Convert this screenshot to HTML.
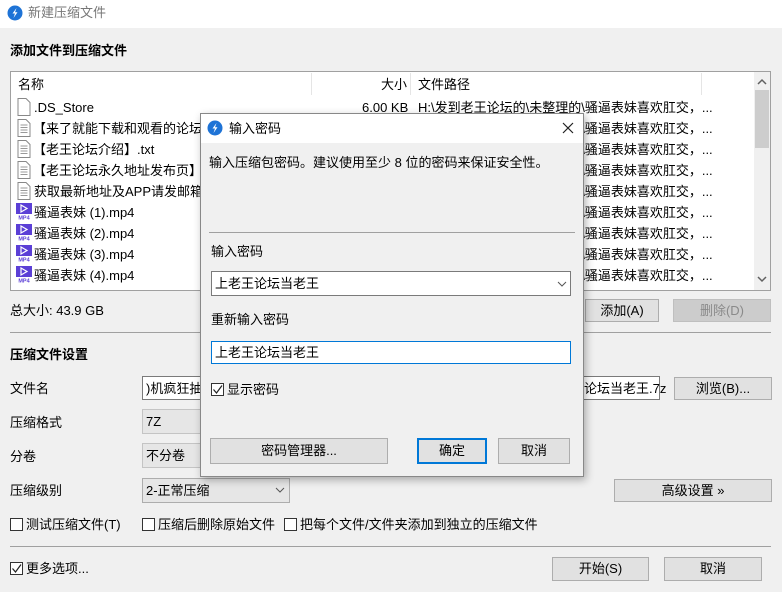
<!DOCTYPE html>
<html><head><meta charset="utf-8">
<style>
*{box-sizing:border-box;margin:0;padding:0}
body{width:782px;height:592px;background:#f0f0f0;position:relative;overflow:hidden;font-family:"Liberation Sans","Noto Sans CJK SC",sans-serif;font-size:13px;color:#000}
.a{position:absolute;white-space:nowrap;line-height:15px}
.btn{position:absolute;background:#e1e1e1;border:1px solid #adadad;text-align:center;font-size:13px}
.cb{position:absolute;width:13px;height:13px;border:1px solid #333;background:#fff}
.ico{position:absolute}
</style></head><body>
<div class="a" style="left:0;top:0;width:782px;height:28px;background:#fff"></div>
<svg class="ico" style="left:7px;top:5px" width="16" height="16" viewBox="0 0 16 16"><circle cx="8" cy="8" r="7.5" fill="#1e73d6"/><path d="M9.5 3 L5.5 8.5 H8 L6.5 13 L10.5 7.3 H8 Z" fill="#fff"/></svg>
<div class="a" style="left:28px;top:5px;color:#777">新建压缩文件</div>

<div class="a" style="left:10px;top:43px;font-weight:bold">添加文件到压缩文件</div>

<div class="a" style="left:10px;top:71px;width:761px;height:220px;background:#fff;border:1px solid #a0a0a0"></div>
<div class="a" style="left:311px;top:73px;width:1px;height:22px;background:#e5e5e5"></div>
<div class="a" style="left:410px;top:73px;width:1px;height:22px;background:#e5e5e5"></div>
<div class="a" style="left:701px;top:73px;width:1px;height:22px;background:#e5e5e5"></div>
<div class="a" style="left:18px;top:77px">名称</div>
<div class="a" style="left:381px;top:77px">大小</div>
<div class="a" style="left:418px;top:77px">文件路径</div>
<div class="a" style="left:754px;top:72px;width:16px;height:218px;background:#f0f0f0"></div>
<div class="a" style="left:755px;top:90px;width:14px;height:58px;background:#cdcdcd"></div>
<svg class="ico" style="left:756px;top:78px" width="12" height="8"><path d="M2 6 L6 2 L10 6" stroke="#606060" stroke-width="1.5" fill="none"/></svg>
<svg class="ico" style="left:756px;top:275px" width="12" height="8"><path d="M2 2 L6 6 L10 2" stroke="#606060" stroke-width="1.5" fill="none"/></svg>

<div id="rows"></div>
<div class="a" style="left:362px;top:100px">6.00 KB</div>

<div class="a" style="left:10px;top:303px">总大小: 43.9 GB</div>
<div class="btn" style="left:585px;top:299px;width:74px;height:23px;line-height:21px">添加(A)</div>
<div class="btn" style="left:673px;top:299px;width:98px;height:23px;line-height:21px;background:#ccc;border-color:#bfbfbf;color:#8a8a8a">删除(D)</div>
<div class="a" style="left:10px;top:332px;width:761px;height:1px;background:#a0a0a0"></div>

<div class="a" style="left:10px;top:347px;font-weight:bold">压缩文件设置</div>
<div class="a" style="left:10px;top:381px">文件名</div>
<div class="a" style="left:142px;top:376px;width:518px;height:24px;background:#fff;border:1px solid #7a7a7a"></div>
<div class="a" style="left:146px;top:381px">)机疯狂抽插</div>
<div class="a" style="left:584px;top:381px">论坛当老王.7z</div>
<div class="btn" style="left:674px;top:377px;width:98px;height:23px;line-height:21px">浏览(B)...</div>

<div class="a" style="left:10px;top:415px">压缩格式</div>
<div class="a" style="left:142px;top:409px;width:148px;height:25px;background:#e6e6e6;border:1px solid #c4c4c4"></div>
<div class="a" style="left:146px;top:414px">7Z</div>
<div class="a" style="left:10px;top:449px">分卷</div>
<div class="a" style="left:142px;top:443px;width:148px;height:25px;background:#e6e6e6;border:1px solid #c4c4c4"></div>
<div class="a" style="left:146px;top:448px">不分卷</div>
<div class="a" style="left:10px;top:483px">压缩级别</div>
<div class="a" style="left:142px;top:478px;width:148px;height:25px;background:#e6e6e6;border:1px solid #adadad"></div>
<div class="a" style="left:146px;top:483px">2-正常压缩</div>
<svg class="ico" style="left:275px;top:487px" width="10" height="6"><path d="M1 1 L5 5 L9 1" stroke="#555" fill="none"/></svg>
<div class="btn" style="left:614px;top:479px;width:158px;height:23px;line-height:21px">高级设置 »</div>

<div class="cb" style="left:10px;top:518px"></div><div class="a" style="left:26px;top:517px">测试压缩文件(T)</div>
<div class="cb" style="left:142px;top:518px"></div><div class="a" style="left:158px;top:517px">压缩后删除原始文件</div>
<div class="cb" style="left:284px;top:518px"></div><div class="a" style="left:300px;top:517px">把每个文件/文件夹添加到独立的压缩文件</div>
<div class="a" style="left:10px;top:546px;width:761px;height:1px;background:#a0a0a0"></div>
<div class="cb" style="left:10px;top:562px"></div>
<svg class="ico" style="left:11px;top:563px" width="11" height="11"><path d="M1.5 5.5 L4.5 9 L10 1.5" stroke="#222" stroke-width="1.2" fill="none"/></svg>
<div class="a" style="left:26px;top:561px">更多选项...</div>
<div class="btn" style="left:552px;top:557px;width:97px;height:24px;line-height:22px">开始(S)</div>
<div class="btn" style="left:664px;top:557px;width:98px;height:24px;line-height:22px">取消</div>

<div class="a" style="left:200px;top:113px;width:384px;height:364px;background:#f0f0f0;border:1px solid #888;box-shadow:2px 3px 8px rgba(0,0,0,0.3)"></div>
<div class="a" style="left:201px;top:114px;width:382px;height:29px;background:#fff"></div>
<svg class="ico" style="left:207px;top:120px" width="16" height="16" viewBox="0 0 16 16"><circle cx="8" cy="8" r="7.5" fill="#1e73d6"/><path d="M9.5 3 L5.5 8.5 H8 L6.5 13 L10.5 7.3 H8 Z" fill="#fff"/></svg>
<div class="a" style="left:229px;top:121px">输入密码</div>
<svg class="ico" style="left:562px;top:122px" width="12" height="12"><path d="M1 1 L11 11 M11 1 L1 11" stroke="#222" stroke-width="1.2"/></svg>
<div class="a" style="left:209px;top:155px">输入压缩包密码。建议使用至少 8 位的密码来保证安全性。</div>
<div class="a" style="left:209px;top:232px;width:366px;height:1px;background:#a0a0a0"></div>
<div class="a" style="left:211px;top:244px">输入密码</div>
<div class="a" style="left:211px;top:271px;width:360px;height:25px;background:#fff;border:1px solid #7a7a7a"></div>
<div class="a" style="left:215px;top:276px">上老王论坛当老王</div>
<svg class="ico" style="left:557px;top:281px" width="10" height="6"><path d="M1 1 L5 5 L9 1" stroke="#555" fill="none"/></svg>
<div class="a" style="left:211px;top:312px">重新输入密码</div>
<div class="a" style="left:211px;top:341px;width:360px;height:23px;background:#fff;border:1px solid #0078d7"></div>
<div class="a" style="left:215px;top:345px">上老王论坛当老王</div>
<div class="cb" style="left:211px;top:383px"></div>
<svg class="ico" style="left:212px;top:384px" width="11" height="11"><path d="M1.5 5.5 L4.5 9 L10 1.5" stroke="#222" stroke-width="1.2" fill="none"/></svg>
<div class="a" style="left:227px;top:382px">显示密码</div>
<div class="btn" style="left:210px;top:438px;width:178px;height:26px;line-height:24px">密码管理器...</div>
<div class="btn" style="left:417px;top:438px;width:70px;height:26px;line-height:22px;border:2px solid #0078d7">确定</div>
<div class="btn" style="left:498px;top:438px;width:72px;height:26px;line-height:24px">取消</div>

<script>
var names=[".DS_Store","【来了就能下载和观看的论坛，","【老王论坛介绍】.txt","【老王论坛永久地址发布页】.txt","获取最新地址及APP请发邮箱自动获取","骚逼表妹 (1).mp4","骚逼表妹 (2).mp4","骚逼表妹 (3).mp4","骚逼表妹 (4).mp4"];
var h="";
for(var i=0;i<9;i++){var y=97+i*21;
 if(i<5){h+='<svg class="ico" style="left:17px;top:'+(y+1)+'px" width="14" height="18"><path d="M1 .5 H9 L13 4.5 V17.5 H1 Z" fill="#fff" stroke="#888"/>'+(i>0?'<path d="M3.5 6h7M3.5 8.5h7M3.5 11h7M3.5 13.5h7" stroke="#999"/>':'')+'</svg>';}
 else{h+='<svg class="ico" style="left:16px;top:'+(y+1)+'px" width="16" height="17"><rect x="0" y="0" width="16" height="17" fill="#5b3fd6"/><path d="M5 2 L11 5.5 L5 9 Z" fill="none" stroke="#fff" stroke-width="1.2"/><rect x="0" y="11" width="16" height="6" fill="#fff"/><text x="8" y="16.5" font-size="5.5" font-family="Liberation Sans" font-weight="bold" text-anchor="middle" fill="#5b3fd6">MP4</text></svg>';}
 h+='<div class="a" style="left:'+(i>0&&i<4?33:34)+'px;top:'+(y+3)+'px">'+names[i]+'</div>';
 h+='<div class="a" style="left:418px;top:'+(y+3)+'px">H:\\发到老王论坛的\\未整理的\\骚逼表妹喜欢肛交，...</div>';
}
document.getElementById("rows").innerHTML=h;
</script>
</body></html>
